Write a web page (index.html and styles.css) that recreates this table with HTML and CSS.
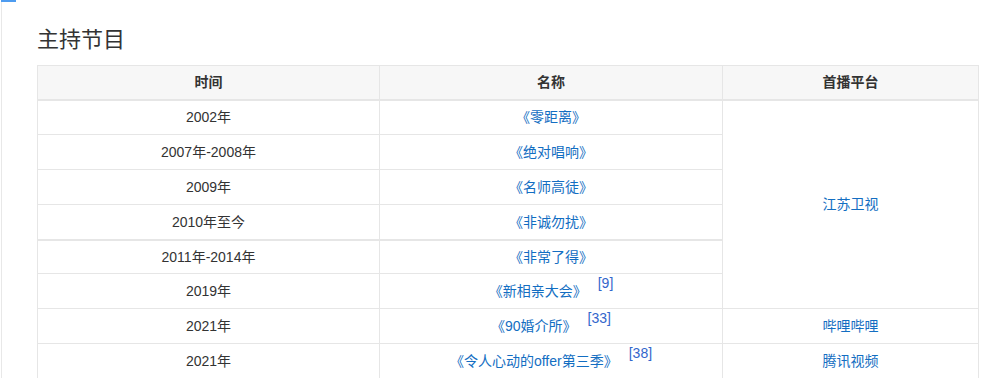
FILE: index.html
```html
<!DOCTYPE html>
<html lang="zh-CN">
<head>
<meta charset="utf-8">
<title>主持节目</title>
<link rel="stylesheet" href="styles.css">
</head>
<body>
<div class="page">
  <div class="panel">
    <h2 class="title">主持节目</h2>
    <table class="tbl">
      <colgroup>
        <col class="c1"><col class="c2"><col class="c3">
      </colgroup>
      <thead>
        <tr><th>时间</th><th>名称</th><th>首播平台</th></tr>
      </thead>
      <tbody>
        <tr><td>2002年</td><td><a class="lnk">《零距离》</a></td><td rowspan="6"><a class="lnk">江苏卫视</a></td></tr>
        <tr><td>2007年-2008年</td><td><a class="lnk">《绝对唱响》</a></td></tr>
        <tr><td>2009年</td><td><a class="lnk">《名师高徒》</a></td></tr>
        <tr><td>2010年至今</td><td><a class="lnk">《非诚勿扰》</a></td></tr>
        <tr class="sep"><td>2011年-2014年</td><td><a class="lnk">《非常了得》</a></td></tr>
        <tr><td>2019年</td><td><a class="lnk">《新相亲大会》</a><sup class="ref">[9]</sup></td></tr>
        <tr><td>2021年</td><td><a class="lnk">《90婚介所》</a><sup class="ref">[33]</sup></td><td><a class="lnk">哔哩哔哩</a></td></tr>
        <tr><td>2021年</td><td><a class="lnk">《令人心动的offer第三季》</a><sup class="ref">[38]</sup></td><td><a class="lnk">腾讯视频</a></td></tr>
      </tbody>
    </table>
  </div>
</div>
</body>
</html>
```

FILE: styles.css
```css
html, body {
  margin: 0;
  padding: 0;
  background: #fff;
}
body {
  font-family: "Liberation Sans", "Noto Sans CJK SC", sans-serif;
  color: #333;
  font-size: 14px;
  overflow: hidden;
}
.page {
  padding-left: 1px;
}
.panel {
  position: relative;
  border-left: 1px solid #e8e8e8;
  padding: 25px 0 0 35px;
  min-height: 400px;
}
.panel::before {
  content: "";
  position: absolute;
  top: 0;
  left: -1px;
  width: 15px;
  height: 2px;
  background: #4e9cf0;
}
.title {
  margin: 0 0 10px 0;
  font-size: 22px;
  line-height: 30px;
  font-weight: normal;
  color: #333;
}
.tbl {
  border-collapse: collapse;
  width: 941px;
  table-layout: fixed;
}
.c1 { width: 342px; }
.c2 { width: 343px; }
.c3 { width: 256px; }
.tbl th,
.tbl td {
  border: 1px solid #e6e6e6;
  text-align: center;
  vertical-align: middle;
  line-height: 20px;
  height: 35px;
  padding: 0 8px;
  box-sizing: border-box;
}
.tbl th {
  background: #f7f7f7;
  font-weight: bold;
  height: 34px;
  border-bottom: 2px solid #e6e6e6;
  color: #333;
}
.tbl tr.sep td {
  height: 34px;
  border-top: 2px solid #e6e6e6;
}
.lnk {
  color: #136ec2;
  text-decoration: none;
}
.ref {
  color: #3366cc;
  font-size: 14px;
  line-height: 1;
  margin-left: 11px;
  position: relative;
  top: -8px;
  vertical-align: baseline;
}
```
